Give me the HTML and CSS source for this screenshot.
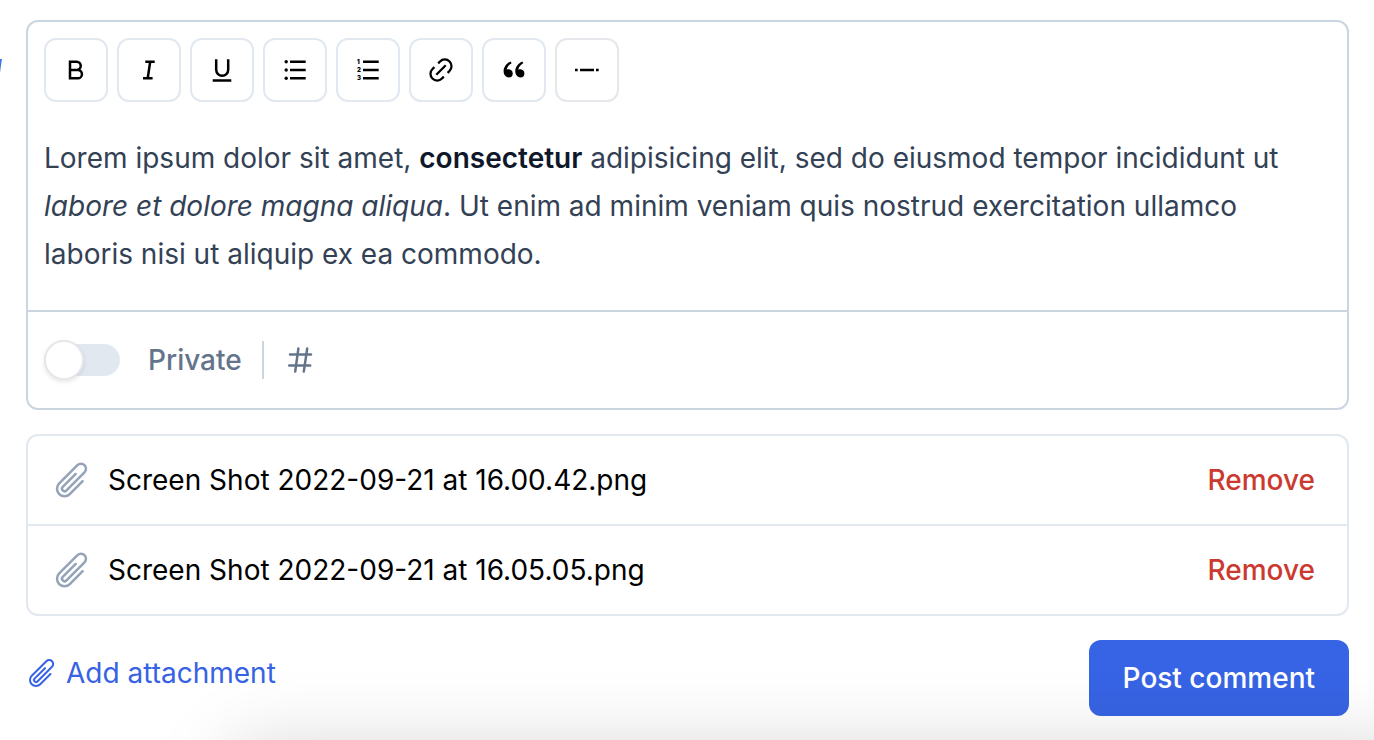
FILE: index.html
```html
<!DOCTYPE html>
<html lang="en">
<head>
<meta charset="utf-8">
<meta name="viewport" content="width=device-width, initial-scale=1">
<title>Post comment</title>
<link rel="stylesheet" href="styles.css">
</head>
<body>
<svg class="sprite" aria-hidden="true">
  <symbol id="clip" viewBox="0 0 24 24"><path fill="none" stroke="currentColor" stroke-width="1.5" stroke-linecap="round" stroke-linejoin="round" d="M18.375 12.739l-7.693 7.693a4.5 4.5 0 01-6.364-6.364l10.94-10.94A3 3 0 1119.5 7.372L8.552 18.32m.009-.01l-.01.01m5.699-9.941l-7.81 7.81a1.5 1.5 0 002.112 2.13"/></symbol>
</svg>
<main class="page">
  <span class="edge-mark" aria-hidden="true"></span>
  <form class="composer">
    <section class="editor">
      <div class="toolbar" role="toolbar" aria-label="Formatting">
        <button type="button" class="tool" aria-label="Bold"><svg viewBox="0 0 32 32"><path class="line" d="M10 7.7h6.6a4.15 4.15 0 0 1 0 8.3H10h7.8a4.15 4.15 0 0 1 0 8.3H10z"/></svg></button>
        <button type="button" class="tool" aria-label="Italic"><svg viewBox="0 0 32 32"><path class="line" d="M12.3 7.7h9.4M10 24.3h9.6M17.2 7.7l-2.5 16.6"/></svg></button>
        <button type="button" class="tool" aria-label="Underline"><svg viewBox="0 0 32 32"><path class="line" d="M10.2 5.3v10.5a6 6 0 0 0 12 0V5.3M6.7 26.4h18.6"/></svg></button>
        <button type="button" class="tool" aria-label="Bulleted list"><svg viewBox="0 0 32 32"><path class="line" d="M11 7.7h15.7M11 16h15.7M11 24.2h15.7"/><circle cx="7.2" cy="7.7" r="1.7"/><circle cx="7.2" cy="16" r="1.7"/><circle cx="7.2" cy="24.2" r="1.7"/></svg></button>
        <button type="button" class="tool" aria-label="Numbered list"><svg viewBox="0 0 32 32"><path class="line" d="M11 7.7h15.7M11 16h15.7M11 24.2h15.7"/><text class="digit" x="5" y="10">1</text><text class="digit" x="5" y="18">2</text><text class="digit" x="5" y="26">3</text></svg></button>
        <button type="button" class="tool" aria-label="Link"><svg viewBox="0 0 24 24"><path class="line line-link" d="M16.95 14.12l1.41-1.41a5 5 0 1 0-7.07-7.07L9.88 7.05M7.05 9.88l-1.41 1.41a5 5 0 1 0 7.07 7.07l1.41-1.41M15.54 8.46l-7.07 7.07"/></svg></button>
        <button type="button" class="tool" aria-label="Quote"><svg viewBox="0 0 32 32"><path transform="translate(2.1 1.9) scale(1.167)" d="M4.583 17.321C3.553 16.227 3 15 3 13.011c0-3.5 2.457-6.637 6.03-8.188l.893 1.378c-3.335 1.804-3.987 4.145-4.247 5.621.537-.278 1.24-.375 1.929-.311 1.804.167 3.226 1.648 3.226 3.489a3.5 3.5 0 0 1-3.5 3.5c-1.073 0-2.099-.49-2.748-1.179zm10 0C13.553 16.227 13 15 13 13.011c0-3.5 2.457-6.637 6.03-8.188l.893 1.378c-3.335 1.804-3.987 4.145-4.247 5.621.537-.278 1.24-.375 1.929-.311 1.804.167 3.226 1.648 3.226 3.489a3.5 3.5 0 0 1-3.5 3.5c-1.073 0-2.099-.49-2.748-1.179z"/></svg></button>
        <button type="button" class="tool tool-rule" aria-label="Horizontal rule"><svg viewBox="0 0 32 32"><path class="line" d="M4 16h2.7M9 16h14M25 16h2.7"/></svg></button>
      </div>
      <div class="text" contenteditable="true" role="textbox" aria-multiline="true" aria-label="Comment" spellcheck="false">Lorem ipsum dolor sit amet, <strong>consectetur</strong> adipisicing elit, sed do eiusmod tempor incididunt ut <em>labore et dolore magna aliqua</em>. Ut enim ad minim veniam quis nostrud exercitation ullamco laboris nisi ut aliquip ex ea commodo.</div>
      <div class="options">
        <input class="switch" type="checkbox" role="switch" id="private">
        <label class="switch-label" for="private">Private</label>
        <span class="divider"></span>
        <button type="button" class="hash" aria-label="Insert tag"><svg viewBox="0 0 32 32"><path class="line round" d="M6 10.4h21M5.2 21.6h21M14.4 4.4l-3.2 23.2M23.2 4.4l-3.4 23.2"/></svg></button>
      </div>
    </section>
    <ul class="files">
      <li class="file"><svg class="clip"><use href="#clip"/></svg><span class="file-name">Screen Shot 2022-09-21 at 16.00.42.png</span><button type="button" class="remove">Remove</button></li>
      <li class="file"><svg class="clip"><use href="#clip"/></svg><span class="file-name">Screen Shot 2022-09-21 at 16.05.05.png</span><button type="button" class="remove">Remove</button></li>
    </ul>
    <div class="actions">
      <button type="button" class="attach"><svg class="clip-small"><use href="#clip"/></svg>Add attachment</button>
      <button type="submit" class="post">Post comment</button>
    </div>
  </form>
  <div class="shade" aria-hidden="true"></div>
</main>
</body>
</html>
```
FILE: styles.css
```css
*, *::before { box-sizing: border-box; }

body {
  margin: 0;
  background: #fff;
  color: #000;
  font-family: Inter, "Liberation Sans", sans-serif;
  font-size: 28px;
  line-height: 40px;
}

button {
  padding: 0;
  border: 0;
  background: none;
  color: inherit;
  font: inherit;
  cursor: pointer;
}

.sprite { display: none; }

.page {
  position: relative;
  min-height: 100vh;
  padding: 20px 25px 24px 26px;
  overflow: hidden;
}

.edge-mark {
  position: absolute;
  top: 59px;
  left: -3px;
  width: 4px;
  height: 13px;
  background: #3b76f0;
  transform: skewX(-8deg);
}

.composer {
  display: flex;
  flex-direction: column;
  gap: 24px;
}

.editor {
  border: 2px solid #cbd5e1;
  border-radius: 12px;
}

.toolbar {
  display: flex;
  flex-wrap: wrap;
  gap: 9px;
  padding: 16px;
}

.tool {
  display: grid;
  place-items: center;
  width: 64px;
  height: 64px;
  border: 2px solid #e2e8f0;
  border-radius: 12px;
}

.tool-rule { border-color: #e5e7eb; }

.tool svg, .hash svg {
  display: block;
  width: 32px;
  height: 32px;
}

.line {
  fill: none;
  stroke: currentColor;
  stroke-width: 2.5;
}

.line-link { stroke-width: 1.7; }

.round { stroke-linecap: round; }

.digit {
  font-size: 6px;
  font-weight: 900;
}

.text {
  padding: 16px 16px 32px;
  color: #334155;
  line-height: 48px;
  outline: 0;
}

.text strong {
  color: #0f172a;
  font-weight: 600;
}

.options {
  display: flex;
  align-items: center;
  height: 98px;
  padding: 0 16px;
  border-top: 2px solid #cbd5e1;
  color: #64748b;
}

.switch {
  appearance: none;
  display: flex;
  align-items: center;
  width: 76px;
  height: 32px;
  margin: 0;
  border-radius: 16px;
  background: #e2e8f0;
}

.switch::before {
  content: "";
  width: 40px;
  height: 40px;
  flex: none;
  border: 2px solid #e5e7eb;
  border-radius: 50%;
  background: #fff;
  box-shadow: 0 2px 4px rgba(0, 0, 0, 0.1);
}

.switch:checked { justify-content: flex-end; }

.switch-label {
  margin-left: 28px;
  font-weight: 500;
}

.divider {
  width: 2px;
  height: 38px;
  margin: 0 20px;
  background: #cbd5e1;
}

.files {
  margin: 0;
  padding: 0;
  border: 2px solid #e2e8f0;
  border-radius: 12px;
  list-style: none;
}

.file {
  display: flex;
  align-items: center;
  gap: 16px;
  padding: 24px 32px 24px 24px;
}

.file + .file { border-top: 2px solid #e2e8f0; }

.clip {
  width: 40px;
  height: 40px;
  flex: none;
  color: #94a3b8;
}

.file-name { flex: 1; }

.remove {
  color: #cb3a30;
  font-weight: 500;
}

.actions {
  display: flex;
  align-items: flex-start;
  justify-content: space-between;
}

.attach {
  display: flex;
  align-items: center;
  gap: 8px;
  padding: 13px 0;
  color: #3662e3;
}

.clip-small {
  width: 32px;
  height: 32px;
}

.post {
  padding: 18px 34px;
  border-radius: 12px;
  background: #3764e4;
  color: #fff;
  font-weight: 500;
}

/* Shadow cast by the panel that sits below the fold */
.shade {
  position: absolute;
  top: 100%;
  left: 230px;
  right: -60px;
  height: 120px;
  border-radius: 20px;
  box-shadow: 0 10px 80px rgba(0, 0, 0, 0.18);
  pointer-events: none;
}
```
